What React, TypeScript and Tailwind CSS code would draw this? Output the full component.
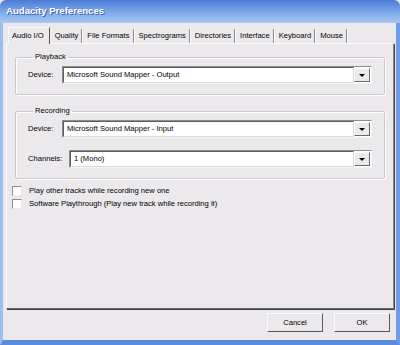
import React from "react";

const tabs = ["Audio I/O", "Quality", "File Formats", "Spectrograms", "Directories", "Interface", "Keyboard", "Mouse"];

function Combo({ value }: { value: string }) {
  return (
    <div className="flex-1 h-[18px] flex bg-white border border-t-[#8e8c90] border-l-[#8e8c90] border-r-[#f4f4f4] border-b-[#f4f4f4]">
      <div className="flex-1 flex items-center pl-[3px] border border-t-[#5e5c60] border-l-[#5e5c60] border-r-[#dcdadd] border-b-[#dcdadd] text-[7.6px] text-black whitespace-nowrap">
        {value}
      </div>
      <div className="w-[16px] flex items-center justify-center bg-[#ece9ec] border border-t-[#fafafa] border-l-[#fafafa] border-r-[#6a686c] border-b-[#6a686c] my-[1px] mr-[1px]">
        <svg width="6" height="3" viewBox="0 0 6 3">
          <path d="M0 0h6L3 3z" fill="#000" />
        </svg>
      </div>
    </div>
  );
}

function Group({ label, children }: { label: string; children: React.ReactNode }) {
  return (
    <fieldset className="border border-[#c9c7cb] shadow-[inset_1px_1px_0_#fff,1px_1px_0_#fff] rounded-[2px] px-[12px] pb-[10px] mx-[8px]">
      <legend className="px-[2px] ml-[5px] text-[7.6px] leading-[12px] text-black">{label}</legend>
      {children}
    </fieldset>
  );
}

function Check({ label }: { label: string }) {
  return (
    <div className="flex items-center gap-[7px] h-[13px]">
      <div className="w-[10px] h-[10px] bg-white border border-t-[#8e8c90] border-l-[#8e8c90] border-r-[#e8e8e8] border-b-[#e8e8e8]" />
      <span className="text-[7.6px] text-black whitespace-nowrap">{label}</span>
    </div>
  );
}

function Btn({ label }: { label: string }) {
  return (
    <div className="w-[56px] h-[19px] flex items-center justify-center bg-[#ece9ec] border border-t-[#fbfbfb] border-l-[#fbfbfb] border-r-[#5a585c] border-b-[#5a585c] text-[7.6px] text-black">
      {label}
    </div>
  );
}

export default function App() {
  return (
    <div className="w-[400px] h-[345px] flex flex-col overflow-hidden bg-[#ece9ec]" style={{ fontFamily: '"Liberation Sans", Arial, sans-serif' }}>
      {/* Title bar */}
      <div className="h-[23px] shrink-0 flex items-center pl-[6px] rounded-t-[6px] bg-gradient-to-b from-[#4a7ad4] via-[#7aa6e8] to-[#a9c8f2]">
        <span className="text-white font-bold text-[9.6px] [text-shadow:1px_1px_0_#3a62a8]">Audacity Preferences</span>
      </div>

      {/* Body with side borders */}
      <div className="flex-1 flex flex-col border-l-[3px] border-l-[#9dbff0] border-r-[4px] border-r-[#6f9ce4] border-b-[5px] border-b-[#5b8ce0]">
        <div className="flex-1 flex flex-col pl-[3px] pr-[2px] pt-[5px]">
          {/* Tabs */}
          <div className="flex items-end h-[15px] pl-[2px] relative z-10">
            {tabs.map((t, i) => (
              <div
                key={t}
                className={
                  i === 0
                    ? "h-[17px] -mb-[1px] pl-[3px] pr-[5px] flex items-center bg-[#ece9ec] border border-b-0 border-t-[#fbfbfb] border-l-[#fbfbfb] border-r-[#5a585c] text-[7.6px] text-black whitespace-nowrap"
                    : "h-[14px] px-[3px] flex items-center border-r border-r-[#8a888c] shadow-[1px_0_0_#fff] text-[7.6px] text-black whitespace-nowrap ml-[2px]"
                }
              >
                {t}
              </div>
            ))}
          </div>

          {/* Tab panel */}
          <div className="h-[266px] flex flex-col border border-t-[#fbfbfb] border-l-[#fbfbfb] border-r-[#8a888c] border-b-[#6a686c] shadow-[1px_1px_0_#404040] pt-[7px]">
            <Group label="Playback">
              <div className="flex items-center mt-[3px]">
                <span className="w-[34px] text-[7.6px] text-black">Device:</span>
                <Combo value="Microsoft Sound Mapper - Output" />
              </div>
            </Group>
            <div className="h-[10px]" />
            <Group label="Recording">
              <div className="flex items-center mt-[3px]">
                <span className="w-[34px] text-[7.6px] text-black">Device:</span>
                <Combo value="Microsoft Sound Mapper - Input" />
              </div>
              <div className="flex items-center mt-[12px]">
                <span className="w-[41px] text-[7.6px] text-black">Channels:</span>
                <Combo value="1 (Mono)" />
              </div>
            </Group>
            <div className="flex flex-col mt-[5px] pl-[5px]">
              <Check label="Play other tracks while recording new one" />
              <Check label="Software Playthrough (Play new track while recording it)" />
            </div>
          </div>

          {/* Buttons */}
          <div className="flex justify-end gap-[11px] mt-[4px] pr-[4px]">
            <Btn label="Cancel" />
            <Btn label="OK" />
          </div>
        </div>
      </div>
    </div>
  );
}
